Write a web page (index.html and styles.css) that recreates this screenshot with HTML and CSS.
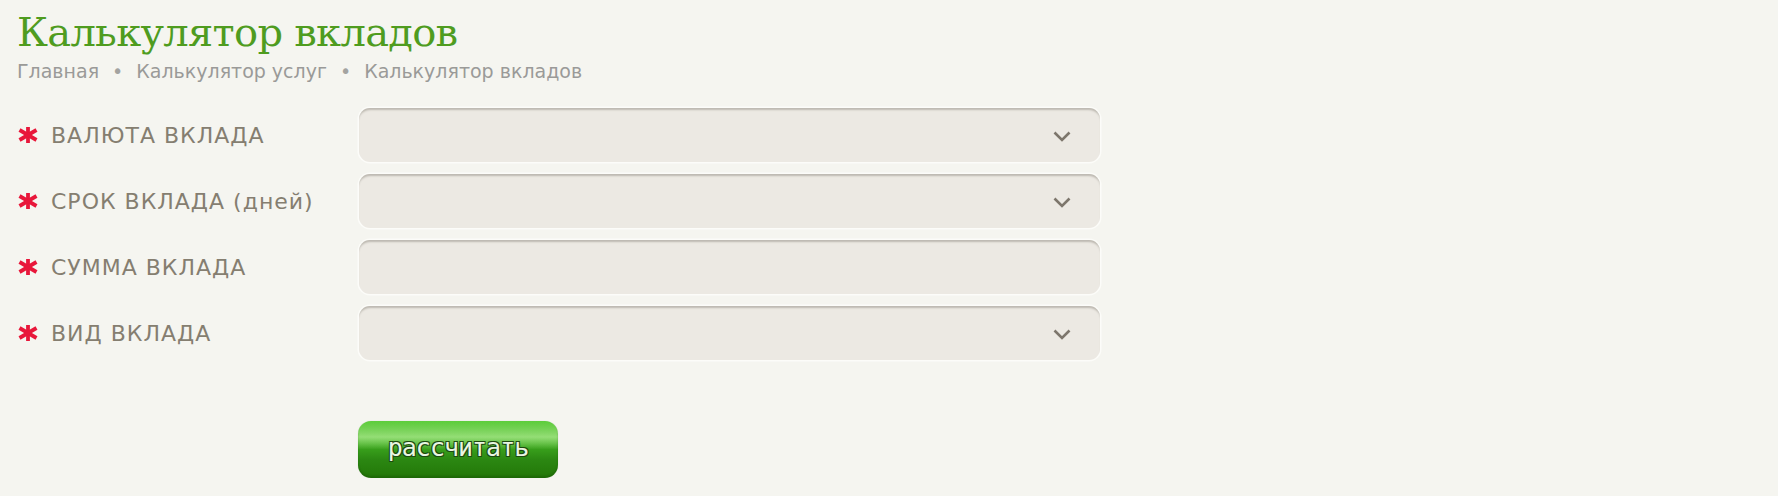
FILE: index.html
```html
<!DOCTYPE html>
<html lang="ru">
<head>
<meta charset="utf-8">
<title>Калькулятор вкладов</title>
<link rel="stylesheet" href="styles.css">
</head>
<body>
<div class="page">
  <h1 class="title">Калькулятор вкладов</h1>
  <div class="crumbs">
    <span>Главная</span><span class="dot">•</span><span>Калькулятор услуг</span><span class="dot">•</span><span>Калькулятор вкладов</span>
  </div>
  <form class="form">
    <div class="label"><svg class="req" viewBox="0 0 20 16" width="20" height="16"><g stroke="#e8173a" stroke-width="3.8"><line x1="10" y1="0" x2="10" y2="16"/><line x1="1.5" y1="3" x2="18.5" y2="13"/><line x1="1.5" y1="13" x2="18.5" y2="3"/></g></svg><span>ВАЛЮТА ВКЛАДА</span></div>
    <div class="field select"><svg class="chev" viewBox="0 0 18 11" width="18" height="11"><polyline points="1.5,1.5 9,9 16.5,1.5" fill="none" stroke="#7d766c" stroke-width="2.6"/></svg></div>

    <div class="label"><svg class="req" viewBox="0 0 20 16" width="20" height="16"><g stroke="#e8173a" stroke-width="3.8"><line x1="10" y1="0" x2="10" y2="16"/><line x1="1.5" y1="3" x2="18.5" y2="13"/><line x1="1.5" y1="13" x2="18.5" y2="3"/></g></svg><span>СРОК ВКЛАДА (дней)</span></div>
    <div class="field select"><svg class="chev" viewBox="0 0 18 11" width="18" height="11"><polyline points="1.5,1.5 9,9 16.5,1.5" fill="none" stroke="#7d766c" stroke-width="2.6"/></svg></div>

    <div class="label"><svg class="req" viewBox="0 0 20 16" width="20" height="16"><g stroke="#e8173a" stroke-width="3.8"><line x1="10" y1="0" x2="10" y2="16"/><line x1="1.5" y1="3" x2="18.5" y2="13"/><line x1="1.5" y1="13" x2="18.5" y2="3"/></g></svg><span>СУММА ВКЛАДА</span></div>
    <div class="field"></div>

    <div class="label"><svg class="req" viewBox="0 0 20 16" width="20" height="16"><g stroke="#e8173a" stroke-width="3.8"><line x1="10" y1="0" x2="10" y2="16"/><line x1="1.5" y1="3" x2="18.5" y2="13"/><line x1="1.5" y1="13" x2="18.5" y2="3"/></g></svg><span>ВИД ВКЛАДА</span></div>
    <div class="field select"><svg class="chev" viewBox="0 0 18 11" width="18" height="11"><polyline points="1.5,1.5 9,9 16.5,1.5" fill="none" stroke="#7d766c" stroke-width="2.6"/></svg></div>

    <div class="actions"><button type="button" class="btn">рассчитать</button></div>
  </form>
</div>
</body>
</html>
```
FILE: styles.css
```css
html, body {
  margin: 0;
  padding: 0;
  background: #f5f5f0;
}
.page {
  padding: 9px 17px 0 17px;
}
.title {
  margin: 0;
  font-family: "DejaVu Serif", Georgia, serif;
  font-weight: normal;
  font-size: 40px;
  line-height: 46px;
  color: #4f9c1f;
  letter-spacing: -0.7px;
}
.crumbs {
  margin-top: 4px;
  font-family: "DejaVu Sans", Verdana, sans-serif;
  font-size: 19px;
  line-height: 24px;
  color: #9a9a98;
  display: flex;
  gap: 13px;
}
.crumbs .dot {
  color: #a3a3a0;
}
.form {
  margin-top: 25px;
  display: grid;
  grid-template-columns: 342px 741px;
  row-gap: 12px;
}
.label {
  display: flex;
  align-items: center;
  gap: 13px;
  font-family: "DejaVu Sans", Verdana, sans-serif;
  font-size: 22px;
  letter-spacing: 1px;
  color: #857e70;
  padding-left: 1px;
}
.req {
  flex: none;
}
.field {
  box-sizing: border-box;
  height: 54px;
  background: #ece9e3;
  border-radius: 11px;
  box-shadow: inset 0 3px 2px -1px #bdb9b1, 0 0 0 1.5px #fcfcf9;
  display: flex;
  align-items: center;
  justify-content: flex-end;
  padding-right: 29px;
}
.chev {
  margin-top: 2px;
}
.actions {
  grid-column: 2;
  margin-top: 49px;
}
.btn {
  display: block;
  width: 200px;
  height: 57px;
  border: none;
  border-radius: 13px;
  margin-left: -1px;
  background:
    linear-gradient(180deg, rgba(255,255,255,0) 0%, rgba(200,250,170,0.6) 28%, rgba(255,255,255,0) 50%),
    linear-gradient(180deg, #5ccd3a 0%, #3da81f 42%, #2b8712 68%, #237708 100%);
  box-shadow: inset 0 -2px 2px rgba(10,60,0,0.25), 0 0 1px rgba(0,0,0,0.2);
  font-family: "DejaVu Sans Mono", monospace;
  font-size: 25px;
  letter-spacing: -1px;
  color: #e9f5e2;
  text-shadow: 1px 1px 0 #1d4a10, -1px -1px 0 #1d4a10, 1px -1px 0 #1d4a10, -1px 1px 0 #1d4a10;
  padding: 0 0 4px 0;
  cursor: pointer;
}
```
